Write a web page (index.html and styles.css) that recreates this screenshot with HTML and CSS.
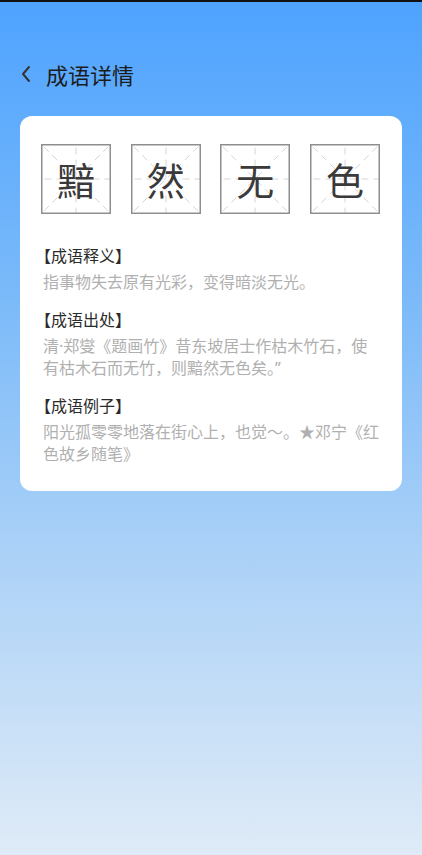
FILE: index.html
```html
<!DOCTYPE html>
<html lang="zh-CN">
<head>
    <meta charset="UTF-8">
    <meta name="viewport" content="width=device-width, initial-scale=1.0">
    <title>成语详情</title>
    <link rel="stylesheet" href="styles.css">
</head>
<body>
    <div class="status-bar"></div>

    <header class="top-bar">
        <svg class="back-icon" width="12" height="18" viewBox="0 0 12 18">
            <path d="M9 2 L3 9 L9 16" fill="none" stroke="#333" stroke-width="2" stroke-linecap="round" stroke-linejoin="round"/>
        </svg>
        <h1>成语详情</h1>
    </header>

    <div class="card">
        <div class="word-row" id="word-row"></div>

        <div class="sections">
            <div class="section">
                <h2>【成语释义】</h2>
                <p>指事物失去原有光彩，变得暗淡无光。</p>
            </div>
            <div class="section">
                <h2>【成语出处】</h2>
                <p>清·郑燮《题画竹》昔东坡居士作枯木竹石，使有枯木石而无竹，则黯然无色矣。”</p>
            </div>
            <div class="section">
                <h2>【成语例子】</h2>
                <p>阳光孤零零地落在街心上，也觉～。★邓宁《红色故乡随笔》</p>
            </div>
        </div>
    </div>

    <script>
        var word = '黯然无色';
        var grid = '<svg class="grid" viewBox="0 0 70 70" width="70" height="70">' +
            '<g stroke="#d6d6d6" stroke-width="1" stroke-dasharray="7 5" stroke-dashoffset="-2.5" fill="none">' +
            '<line x1="1" y1="35" x2="69" y2="35"/>' +
            '<line x1="35" y1="1" x2="35" y2="69"/>' +
            '<line x1="1" y1="1" x2="69" y2="69"/>' +
            '<line x1="69" y1="1" x2="1" y2="69"/>' +
            '</g>' +
            '<rect x="0.75" y="0.75" width="68.5" height="68.5" fill="none" stroke="#8e8e8e" stroke-width="1.5"/>' +
            '</svg>';

        var row = document.getElementById('word-row');
        for (var i = 0; i < word.length; i++) {
            var cell = document.createElement('div');
            cell.className = 'word-cell';
            cell.innerHTML = grid + '<span>' + word[i] + '</span>';
            row.appendChild(cell);
        }
    </script>
</body>
</html>
```

FILE: styles.css
```css
html, body {
    height: 100%;
}
body {
    margin: 0;
    padding: 0;
    font-family: 'Noto Sans CJK SC', 'Noto Sans', sans-serif;
    background: linear-gradient(180deg, #4ea3ff 0%, #7bbaf9 35%, #b3d5f7 70%, #dfebf7 100%);
    color: #333;
    min-height: 855px;
}
.status-bar {
    height: 2px;
    background: #111;
}
.top-bar {
    display: flex;
    align-items: center;
    height: 36px;
    margin-top: 54px;
    padding-left: 20px;
}
.back-icon {
    display: block;
}
.top-bar h1 {
    margin: 0 0 0 14px;
    font-size: 22px;
    font-weight: normal;
    color: #1c1c1c;
    line-height: 36px;
}
.card {
    margin: 24px 20px 0 20px;
    background: #ffffff;
    border-radius: 12px;
    padding: 28px 22px 26px 23px;
}
.word-row {
    display: flex;
    justify-content: space-between;
    margin-left: -2px;
}
.word-cell {
    position: relative;
    width: 70px;
    height: 70px;
}
.word-cell .grid {
    display: block;
}
.word-cell span {
    position: absolute;
    top: 0;
    left: 0;
    width: 70px;
    height: 70px;
    line-height: 70px;
    text-align: center;
    font-size: 38px;
    color: #3a3a3a;
}
.sections {
    margin-top: 29px;
}
.section + .section {
    margin-top: 14px;
}
.section h2 {
    margin: 0;
    font-size: 16px;
    font-weight: normal;
    line-height: 24px;
    color: #2b2b2b;
    font-feature-settings: "halt";
}
.section p {
    margin: 4px 0 0 0;
    font-family: 'Noto Sans', 'Noto Sans CJK SC', sans-serif;
    font-size: 16px;
    line-height: 22px;
    color: #b0b0b0;
}
```
